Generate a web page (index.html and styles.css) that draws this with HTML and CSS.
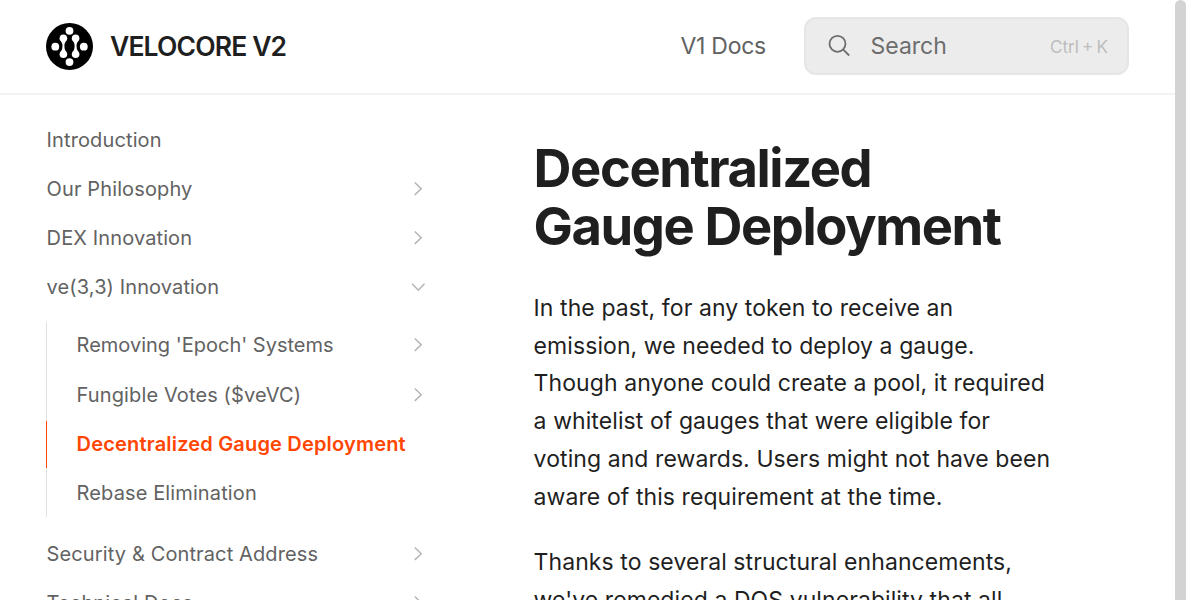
FILE: index.html
```
<!DOCTYPE html>
<html lang="en">
<head>
<meta charset="utf-8">
<title>Decentralized Gauge Deployment - VELOCORE V2</title>
<link rel="stylesheet" href="styles.css">
</head>
<body>
<svg class="sprite" aria-hidden="true">
  <symbol id="chevron" viewBox="0 0 16 16"><path d="M4.8 1.5l6.4 6.2-6.4 6.2"/></symbol>
</svg>
<div class="viewport">
  <div class="page">
    <header class="header">
      <a class="brand">
        <svg class="logo" viewBox="0 0 47 47">
          <circle class="logo-disc" cx="23.5" cy="23.5" r="23.5"/>
          <g class="logo-dots">
            <circle cx="23.5" cy="7.8" r="3.9"/>
            <circle cx="23.5" cy="39.1" r="3.9"/>
            <circle cx="9.3" cy="23.7" r="3.9"/>
            <circle cx="37.8" cy="23.7" r="3.9"/>
            <circle cx="17.4" cy="15.3" r="3.8"/>
            <circle cx="29.6" cy="15.3" r="3.8"/>
            <circle cx="17.4" cy="31.2" r="3.8"/>
            <circle cx="29.6" cy="31.2" r="3.8"/>
            <path d="M15 18Q18 23.3 15 28.5H19.8Q16.9 23.3 19.8 18Z"/>
            <path d="M27.2 18Q30.1 23.3 27.2 28.5H32Q29 23.3 32 18Z"/>
          </g>
        </svg>
        <span class="brand-name">VELOCORE V2</span>
      </a>
      <a class="header-link">V1 Docs</a>
      <div class="search">
        <svg class="search-icon" viewBox="0 0 24 24"><circle cx="10.5" cy="9.8" r="8"/><path d="M16.3 15.6L22.2 21.5"/></svg>
        <span class="search-label">Search</span>
        <span class="search-keys">Ctrl + K</span>
      </div>
    </header>
    <div class="body">
      <nav class="sidebar">
        <a class="item">Introduction</a>
        <a class="item">Our Philosophy<svg class="chevron"><use href="#chevron"/></svg></a>
        <a class="item">DEX Innovation<svg class="chevron"><use href="#chevron"/></svg></a>
        <a class="item">ve(3,3) Innovation<svg class="chevron open"><use href="#chevron"/></svg></a>
        <div class="group">
          <a class="item snug">Removing 'Epoch' Systems<svg class="chevron"><use href="#chevron"/></svg></a>
          <a class="item">Fungible Votes ($veVC)<svg class="chevron"><use href="#chevron"/></svg></a>
          <a class="item active">Decentralized Gauge Deployment</a>
          <a class="item">Rebase Elimination</a>
        </div>
        <a class="item">Security &amp; Contract Address<svg class="chevron"><use href="#chevron"/></svg></a>
        <a class="item">Technical Docs<svg class="chevron"><use href="#chevron"/></svg></a>
      </nav>
      <main class="content">
        <h1 class="title">Decentralized<br>Gauge Deployment</h1>
        <p class="text">In the past, for any token to receive an<br>emission, we needed to deploy a gauge.<br>Though anyone could create a pool, it required<br>a whitelist of gauges that were eligible for<br>voting and rewards. Users might not have been<br>aware of this requirement at the time.</p>
        <p class="text">Thanks to several structural enhancements,<br>we've remedied a DOS vulnerability that all</p>
      </main>
    </div>
  </div>
  <div class="scrollbar"></div>
</div>
</body>
</html>
```
FILE: styles.css
```
* { box-sizing: border-box; }
body {
  margin: 0;
  overflow: hidden;
  background: #fff;
  color: #1f1f1f;
  font-family: Inter, "Liberation Sans", sans-serif;
}
.sprite { display: none; }
.viewport { display: flex; height: 600px; overflow: hidden; }
.page { flex: 1; min-width: 0; }
.scrollbar { width: 11px; height: 620px; border-radius: 6px; background: #d3d3d3; flex: none; }

.header {
  display: flex;
  align-items: center;
  height: 95px;
  padding: 0 46px 1px;
  border-bottom: 2px solid #f3f3f3;
}
.brand { display: flex; align-items: center; gap: 17px; margin-right: auto; }
.logo { width: 47px; height: 47px; }
.logo-disc { fill: #000; }
.logo-dots { fill: #fff; }
.brand-name { font-size: 26.5px; font-weight: 600; letter-spacing: -0.85px; line-height: 36px; padding-bottom: 1px; }
.header-link { font-size: 23px; letter-spacing: -0.25px; color: #626262; margin-right: 38px; }
.search {
  display: flex;
  align-items: center;
  width: 325px;
  height: 58px;
  padding: 0 19px 0 21px;
  border: 2px solid #e6e6e6;
  border-radius: 12px;
  background: #ececec;
  color: #6d6d6d;
}
.search-icon { width: 24px; height: 24px; margin-right: 19.5px; fill: none; stroke: #6d6d6d; stroke-width: 1.8; }
.search-label { font-size: 23px; }
.search-keys { margin-left: auto; font-size: 17px; word-spacing: -1.5px; color: #bdbdbd; padding-top: 1px; }

.body { display: flex; }
.sidebar { width: 424px; flex: none; padding: 21px 0 0 46px; }
.item {
  display: flex;
  align-items: center;
  justify-content: space-between;
  height: 47px;
  margin-bottom: 2.1px;
  padding-left: 0.6px;
  font-size: 20px;
  letter-spacing: 0.12px;
  color: #626262;
  white-space: nowrap;
}
.snug { letter-spacing: 0; }
.chevron { width: 16px; height: 16px; margin-right: -2px; flex: none; fill: none; stroke: #b5b5b5; stroke-width: 1.5; }
.chevron.open { transform: rotate(90deg); }
.group { margin: 11.4px 0 14px; border-left: 1px solid #e2e2e2; }
.group .item { padding-left: 30.6px; margin-left: -1px; }
.group .item:first-child { margin-bottom: 2.8px; }
.group .item:last-child { margin-bottom: 0; }
.group .active { border-left: 1px solid #ff4602; padding-left: 29.6px; color: #ff4602; font-weight: 600; letter-spacing: 0.18px; }

.content { padding: 44px 0 0 109.6px; white-space: nowrap; }
.title { margin: 0 0 34.8px; font-size: 52.5px; line-height: 58px; font-weight: 700; letter-spacing: -1.43px; }
.text { margin: 0 0 28px; font-size: 23px; line-height: 37.75px; letter-spacing: 0.08px; }
```
